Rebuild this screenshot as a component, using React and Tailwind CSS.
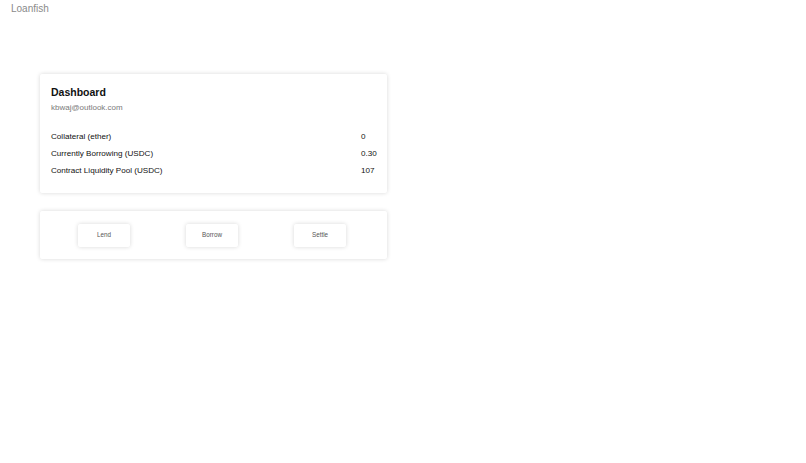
export default function App() {
  const rows = [
    ["Collateral (ether)", "0"],
    ["Currently Borrowing (USDC)", "0.30"],
    ["Contract Liquidity Pool (USDC)", "107"],
  ];
  return (
    <div className="w-[806px] h-[463px] bg-white font-['Liberation_Sans',Arial,sans-serif]">
      <div className="pl-[11px] pt-[3px] text-[10px] leading-[12px] text-[#8a8a8a]">Loanfish</div>
      <div className="ml-[40px] mt-[59px] w-[347px]">
        <div className="h-[119px] rounded-[2px] bg-white shadow-[0_0_4px_rgba(0,0,0,0.16)] pl-[11px] pt-[11px]">
          <div className="text-[10.5px] leading-[14px] font-bold text-[#111]">Dashboard</div>
          <div className="mt-[4px] text-[8px] leading-[10px] text-[#7a7a7a]">kbwaj@outlook.com</div>
          <div className="mt-[19px] grid grid-cols-[310px_auto] gap-y-[7px] text-[8.1px] leading-[10px] text-[#111]">
            {rows.map(([k, v]) => (
              <div key={k} className="contents">
                <div>{k}</div>
                <div>{v}</div>
              </div>
            ))}
          </div>
        </div>
        <div className="mt-[18px] h-[48px] rounded-[2px] bg-white shadow-[0_0_4px_rgba(0,0,0,0.16)] pl-[10px] grid grid-cols-[108px_108px_108px] items-center">
          {["Lend", "Borrow", "Settle"].map((b) => (
            <div key={b} className="flex justify-center">
              <button className="w-[52px] h-[23px] rounded-[2px] bg-white shadow-[0_0_4px_rgba(0,0,0,0.16)] text-[6.3px] text-[#555] font-['Liberation_Sans',Arial,sans-serif]">
                {b}
              </button>
            </div>
          ))}
        </div>
      </div>
    </div>
  );
}
